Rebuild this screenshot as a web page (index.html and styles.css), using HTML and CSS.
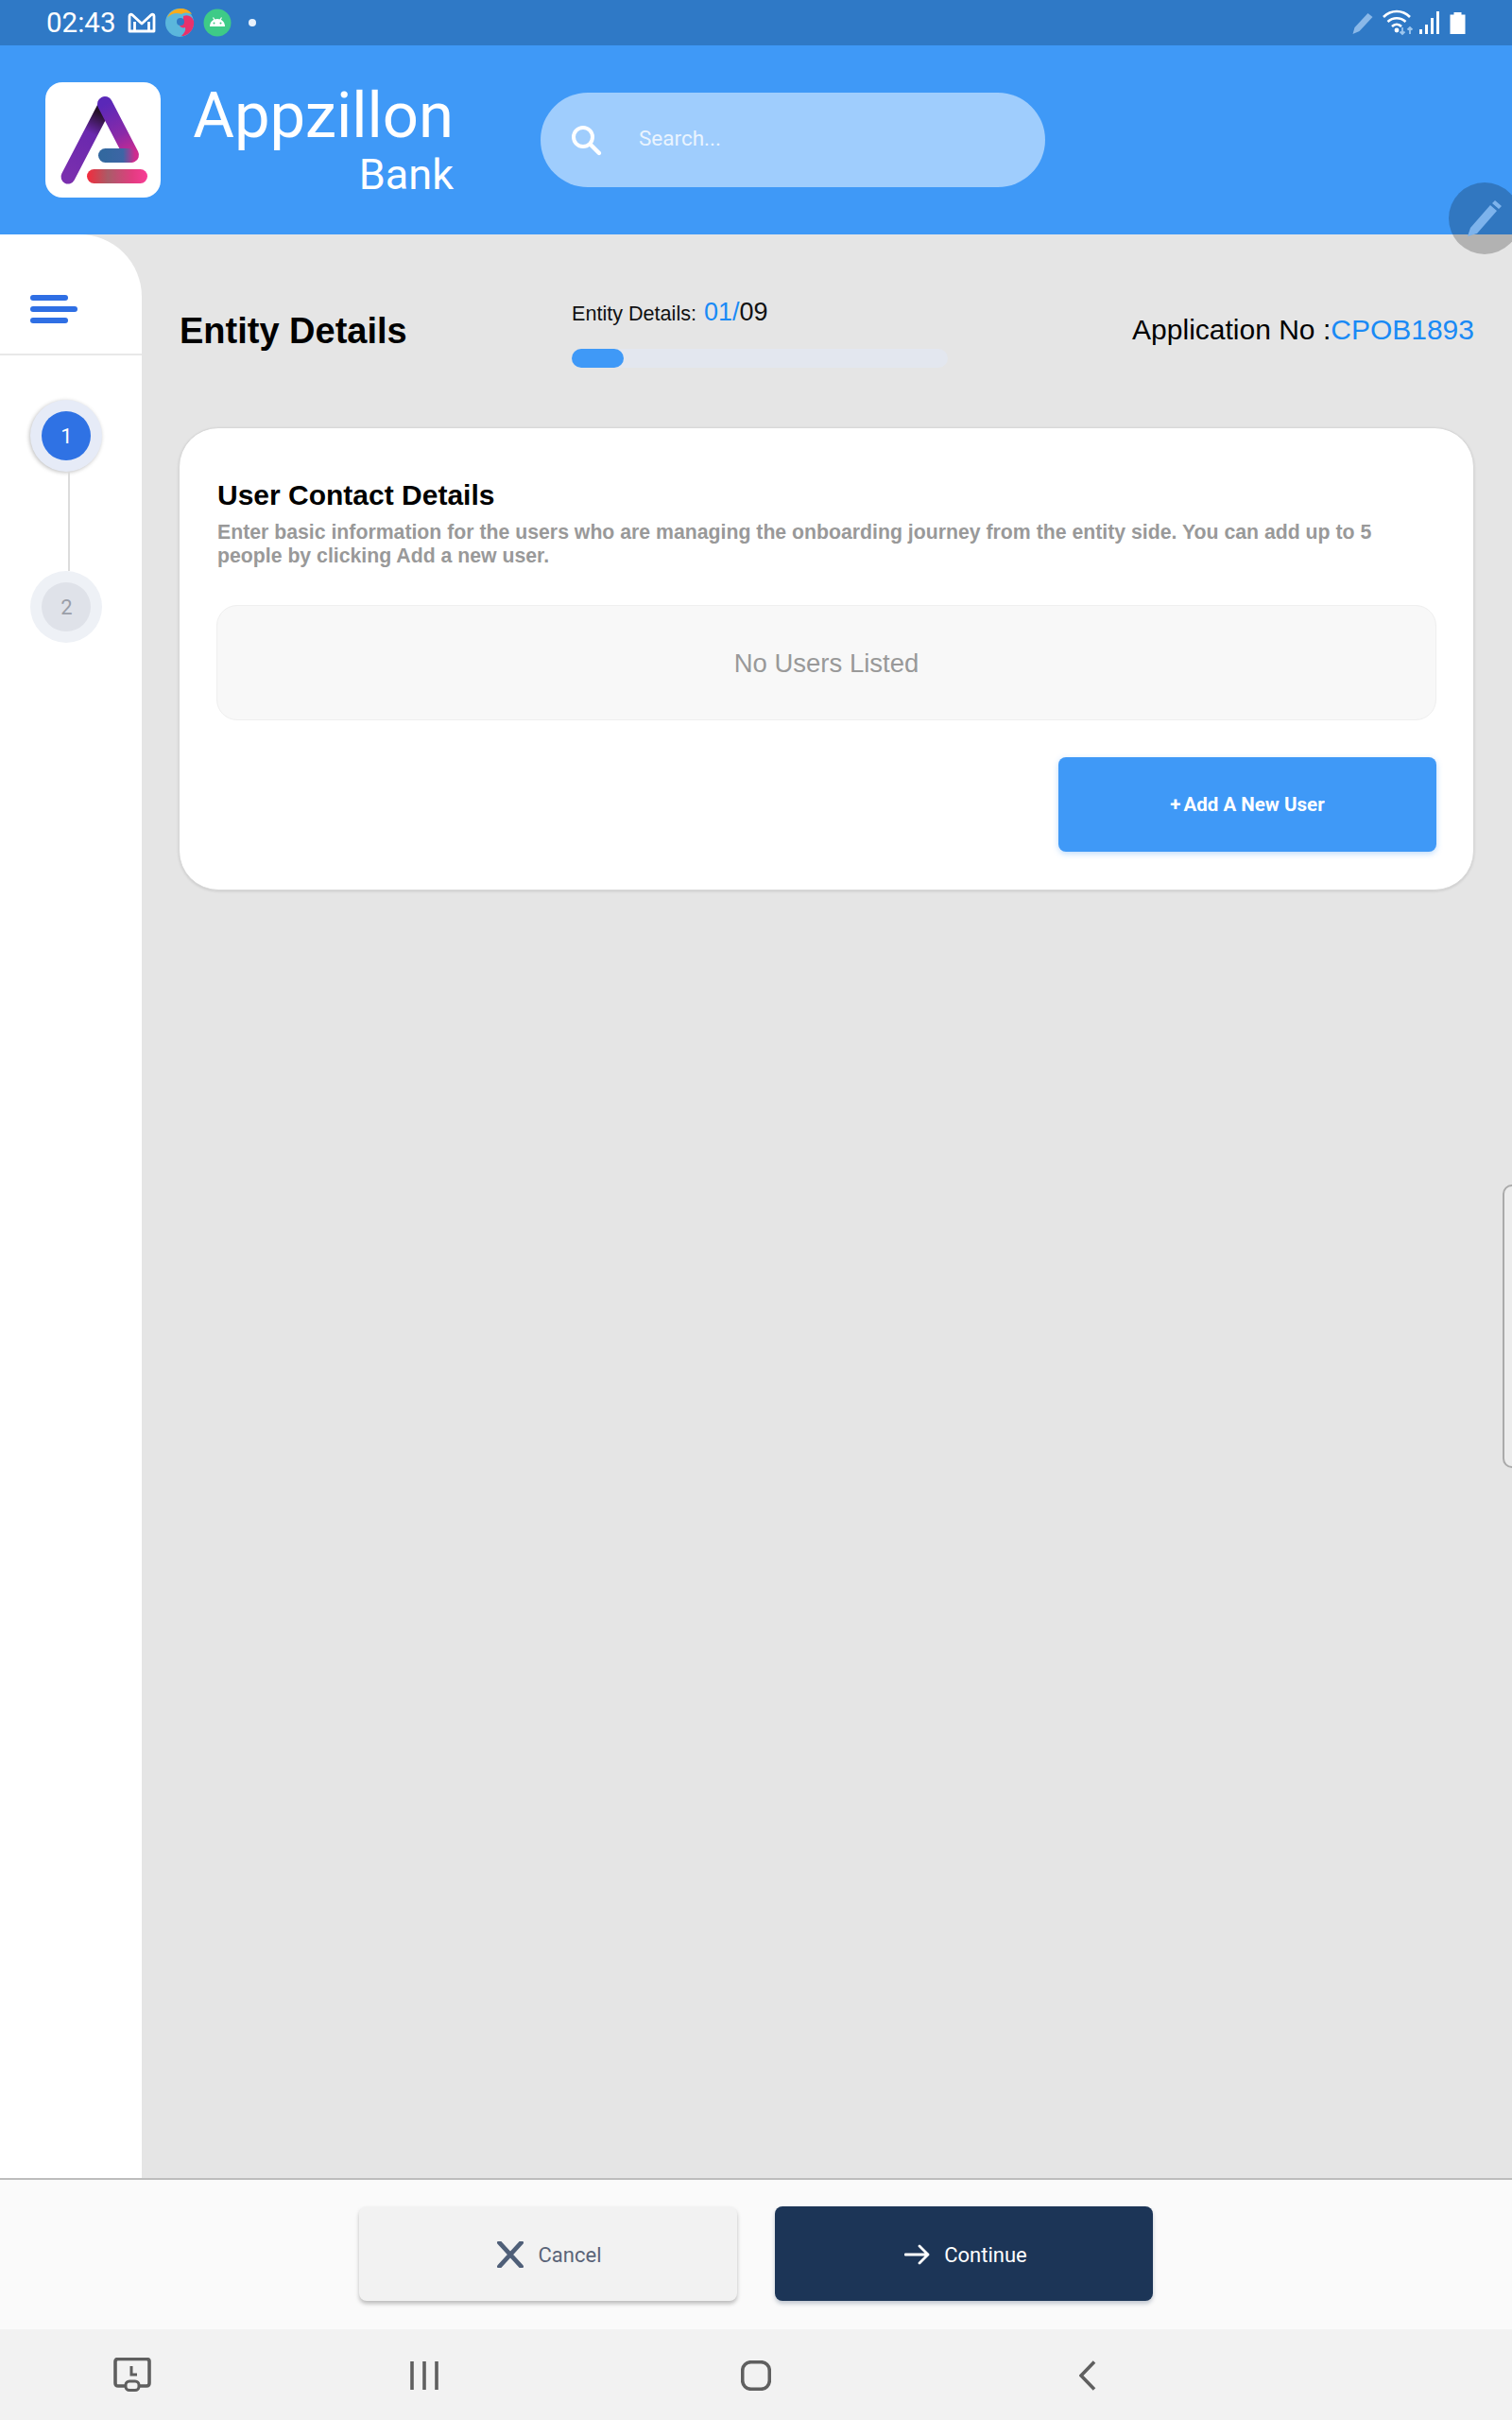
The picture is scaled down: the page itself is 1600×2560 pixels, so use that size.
FILE: index.html
```html
<!DOCTYPE html>
<html lang="en">
<head>
<meta charset="UTF-8" />
<meta name="viewport" content="width=device-width, initial-scale=1" />
<title>Appzillon Bank - Entity Details</title>
<link rel="stylesheet" href="styles.css">
</head>
<body>

<div class="status-bar">
  <span class="status-time">02:43</span>
  <svg class="st-mail" width="30" height="22" viewBox="0 0 30 22"><path d="M2 20V4c0-1.600 1.800-2.300 3-1.200L15 12 25 2.800c1.200-1.100 3-.4 3 1.200v16H2zM7.500 20V10M22.500 20V10" fill="none" stroke="#fff" stroke-width="2.800" stroke-linejoin="round"/></svg>
  <svg class="st-app" width="32" height="32" viewBox="0 0 32 32">
    <circle cx="16" cy="16" r="15" fill="#5bb7dc"/>
    <path d="M3 11C6 3 15-1 23 2c3 1 5 3 6 5-4-2-8-2-11 0-5-2-11-1-15 4z" fill="#f7ab1b"/>
    <path d="M20 9c5-2 9 0 11 5 1 6-2 12-8 15-2 1-3 1-5 1 3-3 5-6 4-9-2 1-5 0-6-2 2 0 4-1 4-4z" fill="#e8326c"/>
    <circle cx="17" cy="15" r="4" fill="#2f79c6"/>
  </svg>
  <svg class="st-droid" width="30" height="30" viewBox="0 0 30 30">
    <circle cx="15" cy="15" r="14.500" fill="#3ecb87"/>
    <path d="M10.500 9.500L12 12M19.500 9.500L18 12" stroke="#fff" stroke-width="1.200"/>
    <path d="M7 19c0-5 3.500-8 8-8s8 3 8 8z" fill="#fff"/>
    <circle cx="11.500" cy="15.500" r="1" fill="#3ecb87"/>
    <circle cx="18.500" cy="15.500" r="1" fill="#3ecb87"/>
  </svg>
  <span class="st-dot"></span>
  <div class="status-right">
    <svg width="25" height="26" viewBox="0 0 24 26"><path d="M1 25l2-7L17 3l5 4L8 22z" fill="#8ab8e8"/></svg>
    <svg class="st-wifi" width="34" height="28" viewBox="0 0 34 28">
      <path d="M1 8c8-8 20-8 28 0M5.500 13c5.500-5 13.500-5 19 0M10 18c3-3 7-3 10 0" fill="none" stroke="#fff" stroke-width="2.600"/>
      <circle cx="15" cy="22" r="2.400" fill="#fff"/>
      <path d="M21 19v7m-2.500-2.500l2.500 2.500 2.500-2.500M29 26v-7m-2.500 2.500l2.500-2.500 2.500 2.500" fill="none" stroke="#9cc6ee" stroke-width="1.800"/>
    </svg>
    <svg class="st-signal" width="22" height="24" viewBox="0 0 22 24"><path d="M0 19h3v5H0zM6 14h3v10H6zM12 7h3v17h-3zM18 0h3v24h-3z" fill="#fff"/></svg>
    <svg class="st-batt" width="17" height="24" viewBox="0 0 16 24"><path d="M0 3.500h4V1h8v2.500h4V24H0z" fill="#fff"/></svg>
  </div>
</div>

<header class="app-header">
  <div class="logo-box">
    <svg width="122" height="122" viewBox="0 0 122 122">
      <defs>
        <linearGradient id="legLeft" x1="24" y1="100" x2="63" y2="23" gradientUnits="userSpaceOnUse">
          <stop offset="0" stop-color="#7a2fae"/>
          <stop offset=".6" stop-color="#6a28ae"/>
          <stop offset=".88" stop-color="#241026"/>
          <stop offset="1" stop-color="#241026"/>
        </linearGradient>
        <linearGradient id="legRight" x1="63" y1="23" x2="91" y2="77" gradientUnits="userSpaceOnUse">
          <stop offset="0" stop-color="#5a28b8"/>
          <stop offset=".6" stop-color="#8a2aa8"/>
          <stop offset="1" stop-color="#cf2b8e"/>
        </linearGradient>
        <linearGradient id="midBar" x1="63" y1="0" x2="95" y2="0" gradientUnits="userSpaceOnUse">
          <stop offset="0" stop-color="#33689f"/>
          <stop offset=".6" stop-color="#3d65a5"/>
          <stop offset="1" stop-color="#cf2b8e"/>
        </linearGradient>
        <linearGradient id="baseBar" x1="44" y1="0" x2="108" y2="0" gradientUnits="userSpaceOnUse">
          <stop offset="0" stop-color="#f42a3c"/>
          <stop offset=".35" stop-color="#a95c68"/>
          <stop offset=".75" stop-color="#e23c80"/>
          <stop offset="1" stop-color="#f83c96"/>
        </linearGradient>
      </defs>
      <path d="M24 100L63 25" fill="none" stroke="url(#legLeft)" stroke-width="15" stroke-linecap="round"/>
      <path d="M63 23L91 77" fill="none" stroke="url(#legRight)" stroke-width="16" stroke-linecap="round"/>
      <rect x="56" y="70" width="40" height="15" rx="7.500" fill="url(#midBar)"/>
      <rect x="44" y="92" width="64" height="15" rx="7.500" fill="url(#baseBar)"/>
    </svg>
  </div>
  <div class="brand">
    <span class="brand-name">Appzillon</span>
    <span class="brand-sub">Bank</span>
  </div>
  <div class="search-box">
    <svg width="36" height="36" viewBox="0 0 36 36"><circle cx="15" cy="15" r="10" fill="none" stroke="#fff" stroke-width="4"/><path d="M22.500 22.500L32 32" stroke="#fff" stroke-width="4.400" stroke-linecap="round"/></svg>
    <span class="search-text">Search...</span>
  </div>
</header>

<div class="page-body">
  <aside class="sidebar">
    <div class="side-top">
      <div class="burger"><span></span><span class="wide"></span><span></span></div>
    </div>
    <div class="stepper">
      <div class="step active"><div class="step-num">1</div></div>
      <div class="step-line"></div>
      <div class="step"><div class="step-num">2</div></div>
    </div>
  </aside>

  <main class="content">
    <div class="top-row">
      <h1 class="page-title">Entity Details</h1>
      <div class="progress-wrap">
        <div class="progress-label">Entity Details: <span class="progress-num"><span class="blue">01/</span>09</span></div>
        <div class="progress-track"><div class="progress-fill" style="width:55px"></div></div>
      </div>
      <div class="app-no">Application No :<span class="blue">CPOB1893</span></div>
    </div>

    <section class="card">
      <h2 class="card-title">User Contact Details</h2>
      <p class="card-desc">Enter basic information for the users who are managing the onboarding journey from the entity side. You can add up to 5 people by clicking Add a new user.</p>
      <div class="empty-box">No Users Listed</div>
      <div class="card-actions">
        <button class="add-btn"><span class="plus">+</span>Add A New User</button>
      </div>
    </section>
  </main>
</div>

<footer class="action-bar">
  <button class="foot-btn cancel">
    <svg width="28" height="28" viewBox="0 0 28 28"><path d="M2.500 1.500L25.500 26.500M25.500 1.500L2.500 26.500" stroke="#4f5f78" stroke-width="4.800" stroke-linecap="round"/></svg>
    Cancel
  </button>
  <button class="foot-btn continue">
    <svg width="28" height="22" viewBox="0 0 28 22"><path d="M1 11h24M16 2l9 9-9 9" fill="none" stroke="#fff" stroke-width="2.800" stroke-linecap="round" stroke-linejoin="round"/></svg>
    Continue
  </button>
</footer>

<nav class="nav-bar">
  <svg class="nav-icon" width="40" height="36" viewBox="0 0 40 36"><path d="M14 30H5c-2 0-3-1-3-3V4c0-1.500 1-2.500 3-2.500h30c2 0 3 1 3 2.500v23c0 2-1 3-3 3h-9" fill="none" stroke="#5f5f5f" stroke-width="3.600"/><path d="M19 9v9h6" fill="none" stroke="#5f5f5f" stroke-width="3"/><rect x="13" y="25" width="14" height="9.500" rx="4" fill="none" stroke="#5f5f5f" stroke-width="3"/></svg>
  <svg class="nav-icon" width="30" height="32" viewBox="0 0 30 32"><path d="M2 1v30M15 1v30M28 1v30" stroke="#5f5f5f" stroke-width="3.600"/></svg>
  <svg class="nav-icon" width="32" height="32" viewBox="0 0 32 32"><rect x="1.700" y="1.700" width="28.600" height="28.600" rx="9" fill="none" stroke="#5f5f5f" stroke-width="3.600"/></svg>
  <svg class="nav-icon" width="18" height="32" viewBox="0 0 18 32"><path d="M16 1.500L2 16l14 14.500" fill="none" stroke="#5f5f5f" stroke-width="3.600"/></svg>
</nav>

<div class="fab">
  <svg width="38" height="40" viewBox="0 0 38 40"><path d="M1 39l3-9L25 6l7 6L11 36zM27 4l3-3 7 6-3 3z" fill="#7db3ec"/></svg>
</div>
<div class="edge-handle"></div>

</body>
</html>
```

FILE: styles.css
```css
* {
  box-sizing: border-box;
}
body {
  position: relative;
  display: flex;
  flex-direction: column;
  width: 1600px;
  height: 2560px;
  margin: 0;
  overflow: hidden;
  background: #e5e5e5;
  font-family: "Liberation Sans", Arial, sans-serif;
}
button {
  border: none;
  cursor: pointer;
}
.blue {
  color: #1a8af5;
}

/* status bar */
.status-bar {
  display: flex;
  align-items: center;
  height: 48px;
  padding: 0 49px;
  background: #2f79c6;
}
.status-time {
  width: 86px;
  color: #fff;
  font-family: Roboto, sans-serif;
  font-size: 29.500px;
  white-space: nowrap;
}
.st-app {
  margin-left: 9px;
}
.st-droid {
  margin-left: 9px;
}
.st-dot {
  width: 8px;
  height: 8px;
  margin-left: 18px;
  border-radius: 50%;
  background: #e8f1fb;
}
.status-right {
  display: flex;
  align-items: center;
  margin-left: auto;
}
.st-wifi {
  margin-left: 8px;
}
.st-signal {
  margin-left: 5px;
}
.st-batt {
  margin-left: 10px;
}

/* header */
.app-header {
  display: flex;
  align-items: center;
  height: 200px;
  padding-left: 48px;
  background: #3f99f7;
}
.logo-box {
  width: 122px;
  height: 122px;
  border-radius: 18px;
  background: #fff;
}
.logo-box svg {
  display: block;
}
.brand {
  display: flex;
  flex-direction: column;
  align-items: flex-end;
  width: 275px;
  margin-left: 35px;
  color: #fff;
  font-family: Roboto, sans-serif;
}
.brand-name {
  font-size: 67px;
  line-height: 72px;
}
.brand-sub {
  margin-top: 2px;
  font-size: 45px;
  line-height: 50px;
}
.search-box {
  display: flex;
  align-items: center;
  width: 534px;
  height: 100px;
  margin-left: 92px;
  padding-left: 30px;
  border-radius: 50px;
  background: #9fcdfd;
}
.search-text {
  margin-left: 38px;
  margin-bottom: 5px;
  color: #eaf4fe;
  font-family: Roboto, sans-serif;
  font-size: 22.500px;
}

/* body */
.page-body {
  display: flex;
  flex: 1;
  min-height: 0;
}
.sidebar {
  width: 150px;
  border-top-right-radius: 66px;
  background: #fff;
}
.side-top {
  height: 128px;
  padding: 64px 0 0 32px;
  border-bottom: 2px solid #e8e8e8;
}
.burger span {
  display: block;
  width: 40px;
  height: 6px;
  border-radius: 3px;
  background: #2f6fe4;
}
.burger span + span {
  margin-top: 6px;
}
.burger .wide {
  width: 50px;
}
.stepper {
  display: flex;
  flex-direction: column;
  padding: 47px 0 0 32px;
}
.step {
  display: flex;
  align-items: center;
  justify-content: center;
  width: 76px;
  height: 76px;
  border-radius: 50%;
  background: #eef1f6;
}
.step-num {
  display: flex;
  align-items: center;
  justify-content: center;
  width: 52px;
  height: 52px;
  padding: 1px 0 0 1px;
  border-radius: 50%;
  background: #dfe2e9;
  color: #9a9ea8;
  font-family: Roboto, sans-serif;
  font-size: 22px;
}
.step.active {
  background: #e6ebf7;
  box-shadow: -1px 1px 4px rgba(0, 0, 0, .25);
}
.step.active .step-num {
  background: #2f72e4;
  color: #fff;
}
.step-line {
  width: 2px;
  height: 105px;
  margin-left: 40px;
  background: #dcdcdc;
}

.content {
  flex: 1;
  padding: 0 40px 0 39px;
}
.top-row {
  display: flex;
  height: 204px;
}
.page-title {
  width: 416px;
  margin: 0;
  padding: 78px 0 0 1px;
  color: #000;
  font-size: 38px;
  font-weight: 700;
  line-height: 48px;
}
.progress-wrap {
  width: 400px;
  padding-top: 66px;
}
.progress-label {
  height: 55px;
  padding-top: 1px;
  color: #111;
  font-size: 21.600px;
  line-height: 30px;
}
.progress-num {
  margin-left: 2px;
  font-size: 27px;
}
.progress-track {
  width: 398px;
  height: 20px;
  border-radius: 10px;
  background: #e3e7ef;
}
.progress-fill {
  height: 20px;
  border-radius: 10px;
  background: #3f99f7;
}
.app-no {
  margin-left: auto;
  padding-top: 81px;
  color: #000;
  font-size: 30px;
  line-height: 40px;
  white-space: nowrap;
}

/* card */
.card {
  height: 490px;
  padding: 53px 39px 0 40px;
  border: 1px solid #d8d8d8;
  border-radius: 42px;
  background: #fff;
  box-shadow: 0 1px 3px rgba(0, 0, 0, .12);
}
.card-title {
  margin: 0;
  color: #000;
  font-size: 30px;
  font-weight: 700;
  line-height: 36px;
}
.card-desc {
  width: 1280px;
  margin: 9px 0 0;
  color: #999;
  font-size: 21.250px;
  font-weight: 700;
  line-height: 25px;
}
.empty-box {
  display: flex;
  align-items: center;
  justify-content: center;
  height: 122px;
  margin: 39px 0 0 -1px;
  padding-top: 2px;
  border: 1px solid #efefef;
  border-radius: 22px;
  background: #f8f8f8;
  color: #999;
  font-size: 27.500px;
}
.card-actions {
  display: flex;
  justify-content: flex-end;
  margin-top: 39px;
}
.add-btn {
  width: 400px;
  height: 100px;
  border-radius: 8px;
  background: #3f99f7;
  box-shadow: 0 2px 6px rgba(63, 153, 247, .35);
  color: #fff;
  font-family: Roboto, sans-serif;
  font-size: 20.500px;
  font-weight: 700;
}
.plus {
  margin-right: 3px;
}

/* footer */
.action-bar {
  display: flex;
  gap: 40px;
  justify-content: center;
  height: 160px;
  padding: 28px 0 0 0;
  border-top: 2px solid #bdbdbd;
  background: #fafafa;
}
.foot-btn {
  display: flex;
  align-items: center;
  justify-content: center;
  gap: 16px;
  width: 400px;
  height: 100px;
  padding-top: 3px;
  border-radius: 8px;
  font-family: Roboto, sans-serif;
  font-size: 22px;
}
.foot-btn.cancel {
  padding-left: 8px;
  background: #f2f2f2;
  box-shadow: 0 3px 4px rgba(0, 0, 0, .25);
  color: #5a6478;
}
.foot-btn.continue {
  gap: 14px;
  padding-left: 10px;
  background: #1c3557;
  box-shadow: 0 3px 4px rgba(28, 53, 87, .25);
  color: #fff;
}

/* android nav */
.nav-bar {
  position: relative;
  height: 96px;
  background: #f2f2f2;
}
.nav-icon {
  position: absolute;
  top: 33px;
}
.nav-icon:nth-child(1) {
  left: 120px;
  top: 30px;
}
.nav-icon:nth-child(2) {
  left: 434px;
}
.nav-icon:nth-child(3) {
  left: 784px;
}
.nav-icon:nth-child(4) {
  left: 1142px;
}

/* overlays */
.fab {
  position: absolute;
  top: 193px;
  left: 1533px;
  display: flex;
  align-items: center;
  justify-content: center;
  width: 76px;
  height: 76px;
  border-radius: 50%;
  background: rgba(0, 0, 0, .22);
}
.edge-handle {
  position: absolute;
  top: 1253px;
  left: 1590px;
  width: 20px;
  height: 300px;
  border: 2px solid #aaa;
  border-radius: 10px;
  background: #ececec;
}
```
